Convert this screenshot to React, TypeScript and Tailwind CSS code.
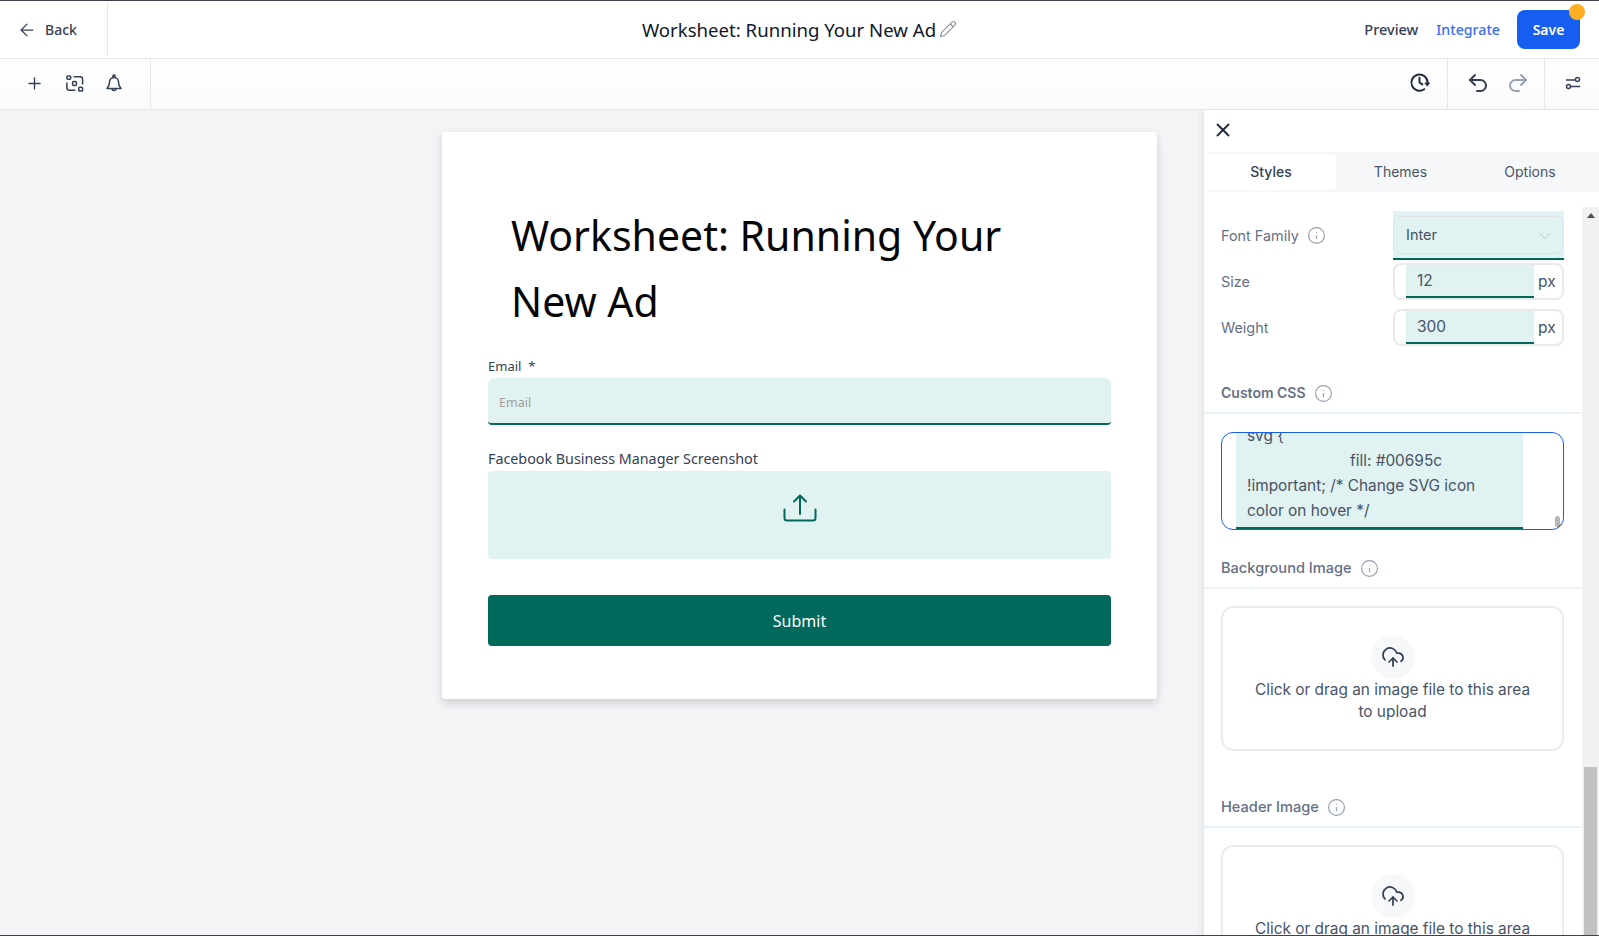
import { ArrowLeft, ChevronDown, CloudUpload, Info, Pencil, Plus, Redo2, Undo2, X } from "lucide-react";

const InfoIcon = () => <Info className="w-[19px] h-[19px] text-[#98a2b3]" strokeWidth={1.5} />;

const SectionHead = ({ title, className, bold }: { title: string; className: string; bold?: boolean }) => (
    <div className={`flex items-center gap-2 pl-[17px] pb-[9px] border-b-2 border-[#eaf3fc] ${className}`}>
        <span className={`leading-5 font-medium text-[#667085] ${bold ? "text-sm font-semibold" : "text-[14.6px]"}`}>{title}</span>
        <InfoIcon />
    </div>
);

const PxInput = ({ label, value, className }: { label: string; value: string; className: string }) => (
    <div className={`flex items-center justify-between pl-[17px] ${className}`}>
        <span className="text-[14.4px] text-[#667085]">{label}</span>
        <div className="flex w-[171px] h-[37px] border-2 border-[#e9eaee] rounded-lg overflow-hidden">
            <div className="ml-[11px] w-[128px] h-full bg-[#e0f2f1] border-b-2 border-[#00695c] pl-[11px] text-[15.5px] leading-[31px] text-[#475467]">
                {value}
            </div>
            <span className="pl-1 text-[15.5px] leading-[33px] text-[#475467]">px</span>
        </div>
    </div>
);

const UploadCard = () => (
    <div className="ml-[17px] w-[343px] h-[145px] border-2 border-[#eaecf0] rounded-xl flex flex-col items-center pt-[27px] shrink-0">
        <div className="w-11 h-11 rounded-full bg-[#f7f8fa] flex items-center justify-center">
            <CloudUpload className="w-6 h-6 text-[#344054]" strokeWidth={1.75} />
        </div>
        <p className="w-[290px] text-center text-[15.4px] leading-[22px] text-[#475467]">
            Click or drag an image file to this area to upload
        </p>
    </div>
);

export default function App() {
    return (
        <div className="w-[1599px] h-[936px] overflow-hidden flex flex-col bg-[#f3f4f6] font-['Inter',sans-serif]">
            {/* top bar */}
            <header className="h-[59px] shrink-0 bg-white border-t border-t-[#3f4150] border-b border-b-[#e5e7eb] flex items-center relative">
                <div className="flex-1 basis-0">
                    <div className="w-[108px] h-[53px] border-r border-[#e5e7eb] flex items-center pl-[17px] gap-2">
                        <ArrowLeft className="w-5 h-5 text-[#344054]" strokeWidth={1.5} />
                        <span className="text-sm font-medium text-[#344054] font-['Noto_Sans',sans-serif]">Back</span>
                    </div>
                </div>
                <div className="flex justify-center items-center gap-[3px]">
                    <span className="text-[18.6px] text-[#101828] font-['Noto_Sans',sans-serif]">Worksheet: Running Your New Ad</span>
                    <Pencil className="w-[18px] h-[18px] text-[#8a94a6]" strokeWidth={1.5} />
                </div>
                <div className="flex-1 basis-0">
                    <div className="flex items-center justify-end pr-[19px]">
                        <span className="text-[14.5px] font-medium text-[#344054] font-['Noto_Sans',sans-serif]">Preview</span>
                        <span className="ml-[18px] text-[14.2px] font-medium text-[#3b6ef6] font-['Noto_Sans',sans-serif]">Integrate</span>
                        <div className="relative ml-[17px] w-[63px] h-[39px] bg-[#155eef] rounded-lg flex items-center justify-center">
                            <span className="text-sm font-semibold text-white font-['Noto_Sans',sans-serif]">Save</span>
                            <span className="absolute -top-[6px] -right-[5px] w-4 h-4 rounded-full bg-[#fdb022]" />
                        </div>
                    </div>
                </div>
            </header>

            {/* tool bar */}
            <div className="h-[51px] shrink-0 bg-gradient-to-b from-white to-[#fbfbfb] border-b border-[#e5e7eb] flex items-center">
                <div className="w-[151px] h-full border-r border-[#e5e7eb] flex items-center pl-[25px] pb-[2px] gap-[21px]">
                    <Plus className="w-[19px] h-[19px] text-[#344054]" strokeWidth={1.75} />
                    <svg className="w-[19px] h-[19px] text-[#344054]" viewBox="0 0 20 20" fill="none" stroke="currentColor" strokeWidth="1.6">
                        <rect x="2" y="2" width="4" height="3.500" rx="1" />
                        <rect x="8" y="8" width="4" height="4" rx="1" />
                        <rect x="14.500" y="14" width="4" height="4" rx="1" />
                        <path d="M9 3h7a2.500 2.500 0 0 1 2.500 2.500V11M2 9v5.500A2.500 2.500 0 0 0 4.500 17H11" />
                    </svg>
                    <svg className="w-[18px] h-[18px] text-[#344054]" viewBox="0 0 18 18" fill="none" stroke="currentColor" strokeWidth="1.5" strokeLinejoin="round">
                        <circle cx="9" cy="2.200" r="1.200" />
                        <path d="M4.500 8a4.500 4.500 0 0 1 9 0c0 3.500 1 5 2.500 6.500H2C3.500 13 4.500 11.500 4.500 8z" />
                        <path d="M7 14.500a2 2 0 0 0 4 0" />
                    </svg>
                </div>
                <div className="flex-1" />
                <div className="h-full flex items-center pb-[3px] pr-[17px] border-r border-[#e5e7eb]">
                    <svg className="w-[21px] h-[21px] text-[#1d2939]" viewBox="0 0 22 22" fill="none" stroke="currentColor" strokeWidth="2" strokeLinecap="round">
                        <path d="M19.500 11A8.500 8.500 0 1 0 16 18" />
                        <path d="M11 6v5l3 2" />
                        <path d="M17 11.500h4.500L19.300 14.500z" fill="currentColor" strokeWidth="1" />
                    </svg>
                </div>
                <div className="w-[97px] h-full border-r border-[#e5e7eb] flex items-center pl-[18px] pb-[3px] gap-[16px]">
                    <Undo2 className="w-6 h-6 text-[#344054]" strokeWidth={2} />
                    <Redo2 className="w-6 h-6 text-[#98a2b3]" strokeWidth={2} />
                </div>
                <div className="w-[54px] pb-[2px] flex items-center justify-center pl-[1px]">
                    <svg className="w-4 h-4 text-[#344054]" viewBox="0 0 16 16" fill="none" stroke="currentColor" strokeWidth="1.5">
                        <circle cx="12.500" cy="4.500" r="2" />
                        <path d="M1 5h9.500M6 11.500h9" />
                        <circle cx="3.500" cy="11.500" r="2" />
                    </svg>
                </div>
            </div>

            <div className="flex-1 min-h-0 flex">
                {/* canvas */}
                <main className="flex-1 pl-[442px] pt-[22px]">
                    <div className="w-[715px] h-[567px] bg-white rounded shadow-[0_4px_8px_rgba(16,24,40,0.16)] pt-[70px] pl-[46px] font-['Noto_Sans',sans-serif]">
                        <h1 className="pl-[23px] w-[600px] text-[41px] leading-[66px] text-[#050505]">Worksheet: Running Your New Ad</h1>
                        <label className="block mt-[23px] text-[13px] leading-[18px] text-[#344054]">Email&nbsp; *</label>
                        <div className="w-[623px] h-[47px] mt-[3px] bg-[#e0f2f1] rounded-t-md rounded-b-sm border-b-2 border-[#00695c] pl-[11px] text-[12.500px] leading-[50px] text-[#9e9e9e]">
                            Email
                        </div>
                        <label className="block mt-[24px] text-[14.3px] leading-[19px] text-[#344054]">Facebook Business Manager Screenshot</label>
                        <div className="w-[623px] h-[88px] mt-[3px] bg-[#e0f2f1] rounded flex justify-center pt-[23px]">
                            <svg className="w-[34px] h-[28px] text-[#00695c]" viewBox="0 0 34 28" fill="none" stroke="currentColor" strokeWidth="2" strokeLinecap="round" strokeLinejoin="round">
                                <path d="M17 20V2M11 7.500 17 1.500l6 6" />
                                <path d="M1.500 15.500v8.500a2.500 2.500 0 0 0 2.500 2.500h26a2.500 2.500 0 0 0 2.500-2.500v-8.500" />
                            </svg>
                        </div>
                        <div className="w-[623px] h-[51px] mt-[36px] bg-[#00695c] rounded flex items-center justify-center text-base text-white">
                            Submit
                        </div>
                    </div>
                </main>

                {/* side panel */}
                <aside className="w-[396px] h-full shrink-0 bg-white border-l border-[#e5e7eb] shadow-[-3px_0_4px_rgba(0,0,0,0.04)] flex flex-col overflow-hidden">
                    <div className="h-[42px] shrink-0 flex items-center pl-[8px] pb-[2px]">
                        <X className="w-[22px] h-[22px] text-[#1d2939]" strokeWidth={2} />
                    </div>
                    <div className="h-10 shrink-0 ml-[2px] bg-[#f6f7f9] rounded flex items-center text-sm text-[#475467]">
                        <div className="w-[130px] h-9 bg-white rounded flex items-center justify-center font-medium text-[#344054]">Styles</div>
                        <div className="w-[129px] text-center">Themes</div>
                        <div className="w-[130px] text-center">Options</div>
                    </div>
                    <div className="flex-1 min-h-0 flex pt-[15px]">
                        <div className="w-[378px] shrink-0 overflow-hidden">
                            <div className="flex items-start justify-between pl-[17px] pt-[4px]">
                                <div className="flex items-center gap-2 h-[49px]">
                                    <span className="text-[14.4px] text-[#667085]">Font Family</span>
                                    <InfoIcon />
                                </div>
                                <div className="w-[171px] h-[49px] mr-[18px] bg-[#e0f2f1] border-b-2 border-[#00695c] pt-[5px]">
                                    <div className="h-[38px] border border-[#dde3e6] rounded-lg flex items-center justify-between pl-3 pr-2 text-[14.5px] text-[#475467]">
                                        Inter
                                        <ChevronDown className="w-5 h-5 mt-[2px] text-[#c3ccd0]" strokeWidth={1.25} />
                                    </div>
                                </div>
                            </div>
                            <div className="pr-[18px]">
                                <PxInput label="Size" value="12" className="mt-[3px]" />
                                <PxInput label="Weight" value="300" className="mt-[9px]" />
                            </div>
                            <SectionHead title="Custom CSS" bold className="mt-[37px]" />
                            <div className="ml-[17px] mt-[18px] w-[343px] h-[98px] border border-[#155eef] rounded-xl overflow-hidden relative">
                                <div className="ml-[14px] w-[287px] h-full bg-[#e0f2f1] border-b-2 border-[#00695c] overflow-hidden">
                                    <div className="pl-[11px] -mt-[10px] text-[15.4px] leading-[25px] text-[#475467]">
                                        <div>svg {"{"}</div>
                                        <div className="pl-[103px]">fill: #00695c</div>
                                        <div>!important; /* Change SVG icon</div>
                                        <div>color on hover */</div>
                                    </div>
                                </div>
                                <span className="absolute right-[3px] bottom-[2px] w-[5px] h-[11px] rounded-sm bg-[#b5b5b5]" />
                                <svg className="absolute right-0 bottom-0 w-2 h-2 text-[#555]" viewBox="0 0 8 8" stroke="currentColor" strokeWidth="0.8">
                                    <path d="M1 8 8 1M4 8l4-4" />
                                </svg>
                            </div>
                            <SectionHead title="Background Image" className="mt-[28px]" />
                            <div className="mt-[17px]">
                                <UploadCard />
                            </div>
                            <SectionHead title="Header Image" className="mt-[46px]" />
                            <div className="mt-[17px]">
                                <UploadCard />
                            </div>
                        </div>
                        {/* scrollbar */}
                        <div className="flex-1 bg-[#f1f1f1] relative">
                            <span className="absolute top-[6px] left-[5px] w-0 h-0 border-x-4 border-x-transparent border-b-[5px] border-b-[#505050]" />
                            <span className="absolute left-[2px] right-[2px] bottom-0 h-[168px] bg-[#c1c1c1]" />
                        </div>
                    </div>
                </aside>
            </div>
            <div className="h-px shrink-0 bg-[#3f4150]" />
        </div>
    );
}
